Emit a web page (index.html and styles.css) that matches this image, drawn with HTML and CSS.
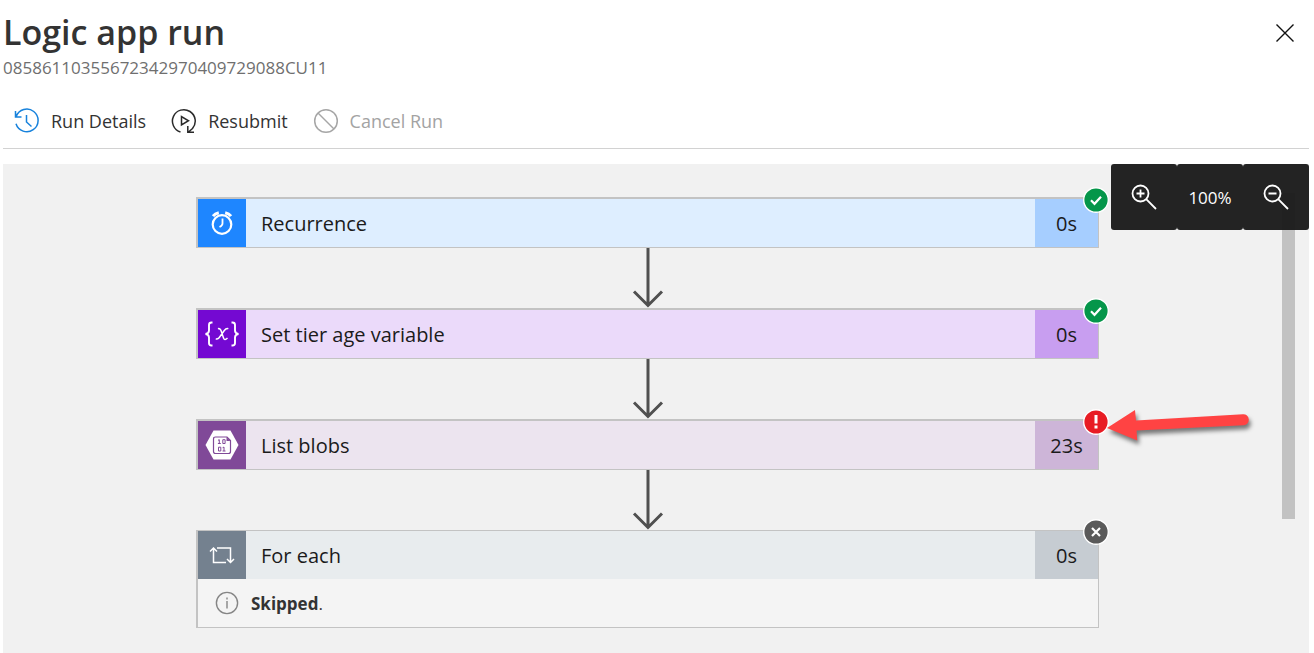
FILE: index.html
```html
<!DOCTYPE html>
<html lang="en">
<head>
<meta charset="utf-8">
<title>Logic app run</title>
<link rel="stylesheet" href="styles.css">
</head>
<body>
<header class="header">
  <div class="heading">
    <h1 class="title">Logic app run</h1>
    <p class="run-id">08586110355672342970409729088CU11</p>
  </div>
  <button class="close" aria-label="Close">
    <svg width="20" height="20" viewBox="0 0 20 20" fill="none" stroke="#111" stroke-width="1.4"><path d="M1.5 1.5 18.500 18.500M18.500 1.500 1.500 18.500"/></svg>
  </button>
</header>
<nav class="commands" aria-label="Run commands">
  <button class="command">
    <svg width="26" height="26" viewBox="0 0 26 26" fill="none" stroke="#1782dc" stroke-width="1.500"><path d="M2.200 8.500A11.300 11.300 0 1 1 2 15.800M1.500 3v6h6M12.500 7v7l5 4.500"/></svg>
    <span>Run Details</span>
  </button>
  <button class="command">
    <svg width="26" height="26" viewBox="0 0 26 26" fill="none" stroke="#2a2a2a" stroke-width="1.500"><path d="M9.500 24A11.400 11.400 0 1 1 21.500 20.500L17.500 24M16.800 18v6.200H23M10.500 8.500v8.500l7-4.250z"/></svg>
    <span>Resubmit</span>
  </button>
  <button class="command" disabled>
    <svg width="26" height="26" viewBox="0 0 26 26" fill="none" stroke="#a6a6a6" stroke-width="1.500"><circle cx="13" cy="13" r="11.300"/><path d="m5 5 16 16"/></svg>
    <span>Cancel Run</span>
  </button>
</nav>
<main class="canvas">
  <div class="flow">
    <section class="card recurrence">
      <div class="row">
        <span class="icon"><svg width="26" height="28" viewBox="0 0 26 28" fill="none" stroke="#fff"><circle cx="13" cy="15.500" r="9.300" stroke-width="2.200"/><path d="M13.500 9.500v5q0 2-3 3.500" stroke-width="1.800"/><path d="M4 7.200Q6 4.600 9.800 3.800M22 7.200Q20 4.600 16.200 3.800" stroke-width="3"/></svg></span>
        <h2 class="name">Recurrence</h2><span class="time">0s</span>
      </div>
      <svg class="badge" viewBox="0 0 26 26"><circle cx="13" cy="13" r="12.300" fill="#05964a" stroke="#fff" stroke-width="1.400"/><path d="m8 13.300 3.500 3.500 6.500-7" fill="none" stroke="#fff" stroke-width="2.200"/></svg>
    </section>
    <svg class="link" viewBox="0 0 32 60"><path d="M16 0v57M2 43.500 16 57.500 30 43.500"/></svg>
    <section class="card variable">
      <div class="row">
        <span class="icon"><svg width="36" height="28" viewBox="0 0 36 28" fill="none" stroke="#fff" stroke-width="1.900"><path d="M8.500 2.500H7.500Q5 2.500 5 5v5.500Q5 13.500 1.500 14q3.500.5 3.500 3.500V23q0 2.500 2.500 2.500h1M27.500 2.500h1Q31 2.500 31 5v5.500q0 3 3.500 3.500-3.500.5-3.500 3.500V23q0 2.500-2.500 2.500h-1"/><path d="M14 8.800q2-.8 3 1.700l2.600 7.800q1 2.400 3.900-.3M24.300 8.800q-2-.8-4 1.700l-5 7Q13.600 19.700 11.800 18.600" stroke-width="1.500"/></svg></span>
        <h2 class="name">Set tier age variable</h2><span class="time">0s</span>
      </div>
      <svg class="badge" viewBox="0 0 26 26"><circle cx="13" cy="13" r="12.300" fill="#05964a" stroke="#fff" stroke-width="1.400"/><path d="m8 13.300 3.500 3.500 6.500-7" fill="none" stroke="#fff" stroke-width="2.200"/></svg>
    </section>
    <svg class="link" viewBox="0 0 32 60"><path d="M16 0v57M2 43.500 16 57.500 30 43.500"/></svg>
    <section class="card blobs">
      <div class="row">
        <span class="icon"><svg width="34" height="30" viewBox="0 0 34 30" fill="none" stroke="#804998"><path d="M8.500.500h17L33.500 15l-8 14.500h-17L.500 15z" fill="#fff" stroke="none"/><path d="M10.500 7h11.500l3.500 3.500v11q0 2-2 2h-13q-2 0-2-2V9q0-2 2-2z" stroke-width="1.200"/><path d="M21.500 7v4h4z" fill="#804998" stroke="none"/><path d="M13 10.300l1.300-.600V13.500M12.900 13.500h2.900M13.500 17.200h2.300v3.800h-2.300zM17.800 9.700h2.300v3.800h-2.300zM17.600 17.700l1.400-.600v3.900M17.600 21h2.900" stroke-width="1"/></svg></span>
        <h2 class="name">List blobs</h2><span class="time">23s</span>
      </div>
      <svg class="badge" viewBox="0 0 26 26"><circle cx="13" cy="13" r="12.300" fill="#e81c24" stroke="#fff" stroke-width="1.400"/><path d="M13 6v8.500M13 16.500v3" stroke="#fff" stroke-width="3"/></svg>
      <svg class="pointer" viewBox="0 0 150 44"><path d="M3 22 31 4l1 10.500L139 8.200a5.500 5.500 0 0 1 .600 11L32.600 24.500l.600 10z" fill="#ff4343"/></svg>
    </section>
    <svg class="link" viewBox="0 0 32 60"><path d="M16 0v57M2 43.500 16 57.500 30 43.500"/></svg>
    <section class="card each">
      <div class="row">
        <span class="icon"><svg width="26" height="20" viewBox="0 0 26 20" fill="none" stroke="#fff" stroke-width="1.500"><path d="M4.500 3v14.500H17M1 6.500 4.500 3 8 6.500M8 3h13.500v14.500M18 14l3.500 3.500L25 14"/></svg></span>
        <h2 class="name">For each</h2><span class="time">0s</span>
      </div>
      <p class="note"><svg width="24" height="24" viewBox="0 0 24 24" fill="none" stroke="#858585" stroke-width="1.400"><circle cx="12" cy="12" r="10.600"/><path d="M12 10v7.500M12 6.500v2"/></svg><span><strong>Skipped</strong>.</span></p>
      <svg class="badge" viewBox="0 0 26 26"><circle cx="13" cy="13" r="12.300" fill="#5a5a5a" stroke="#fff" stroke-width="1.400"/><path d="m9 9 8 8M17 9l-8 8" stroke="#fff" stroke-width="2.200"/></svg>
    </section>
  </div>
  <div class="scrollbar"><div class="thumb"></div></div>
  <div class="zoom">
    <button class="zoom-part" aria-label="Zoom in"><svg width="26" height="26" viewBox="0 0 26 26" fill="none" stroke="#fff" stroke-width="1.800"><circle cx="9.500" cy="9.500" r="8"/><path d="m15.200 15.200 9.800 9.800M9.500 5.500v8M5.500 9.500h8"/></svg></button>
    <output class="zoom-part">100%</output>
    <button class="zoom-part" aria-label="Zoom out"><svg width="26" height="26" viewBox="0 0 26 26" fill="none" stroke="#fff" stroke-width="1.800"><circle cx="9.500" cy="9.500" r="8"/><path d="m15.200 15.200 9.800 9.800M5.500 9.500h8"/></svg></button>
  </div>
</main>
</body>
</html>
```
FILE: styles.css
```css
* { box-sizing: border-box; }
body {
  margin: 0;
  padding: 0 5px 0 3px;
  min-height: 100vh;
  display: flex;
  flex-direction: column;
  background: #fff;
  color: #333;
  font-family: "Open Sans", "Noto Sans", sans-serif;
}
h1, h2, p { margin: 0; font-weight: 400; }
svg { display: block; flex: none; }
button { border: 0; padding: 0; background: none; color: inherit; font: inherit; }

.header { display: flex; justify-content: space-between; align-items: flex-start; padding-top: 10px; }
.title { font-size: 34px; line-height: 45px; font-weight: 600; color: #333; }
.run-id { font-size: 17px; line-height: 25px; color: #6f6f6f; }
.close { padding: 13px 14px; }

.commands {
  display: flex;
  gap: 25px;
  padding: 27px 11px 14px;
  border-bottom: 1px solid #d2d2d2;
  margin-bottom: 15px;
}
.command { display: flex; align-items: center; gap: 11px; height: 27px; font-size: 18px; line-height: 26px; }
.command:disabled { color: #a3a3a3; }

.canvas { position: relative; flex: 1; display: flex; background: #f1f1f1; }
.flow { flex: 1; display: flex; flex-direction: column; align-items: center; padding: 33px 24px 25px; }
.card { position: relative; width: 100%; max-width: 903px; border: 1px solid #c3c3c3; border-width: 2px 1px 1px 2px; }
.row { display: flex; height: 48px; align-items: stretch; color: #1b1b1b; font-size: 20px; line-height: 50px; }
.icon { width: 48px; display: flex; align-items: center; justify-content: center; }
.name { flex: 1; padding-left: 15px; font-size: inherit; }
.time { width: 63px; text-align: center; }
.recurrence .row { background: #deeeff; }
.recurrence .icon { background: #1e86ff; }
.recurrence .time { background: #a6ceff; }
.variable .row { background: #ebdafa; }
.variable .icon { background: #7409d2; }
.variable .time { background: #c89ef0; }
.blobs .row { background: #ece4ef; }
.blobs .icon { background: #804998; }
.blobs .time { background: #cdb5d8; }
.each .row { background: #e8ecee; }
.each .icon { background: #74818f; }
.each .time { background: #c6ccd2; }
.each { background: #f4f4f4; border-top-width: 1px; }
.badge { position: absolute; top: -12px; right: -11px; width: 26px; height: 26px; }
.pointer { position: absolute; top: -15px; left: 100%; width: 150px; height: 44px; margin-left: 6px; filter: drop-shadow(2px 4px 2px rgba(0, 0, 0, .5)); }
.note { display: flex; align-items: center; gap: 12px; height: 48px; padding-left: 17px; font-size: 17px; }
.note strong { font-weight: 700; }
.link { width: 32px; height: 60px; fill: none; stroke: #505050; stroke-width: 3; }

.scrollbar { width: 17px; padding-top: 29px; display: flex; justify-content: flex-start; }
.thumb { width: 13px; height: 326px; margin-left: -10px; background: #c2c2c2; }
.zoom { position: absolute; top: 0; right: 0; display: flex; }
.zoom-part { width: 66px; height: 66px; display: flex; align-items: center; justify-content: center; border-radius: 3px; background: rgba(28, 28, 28, .970); color: #fff; font-size: 17px; }
```
